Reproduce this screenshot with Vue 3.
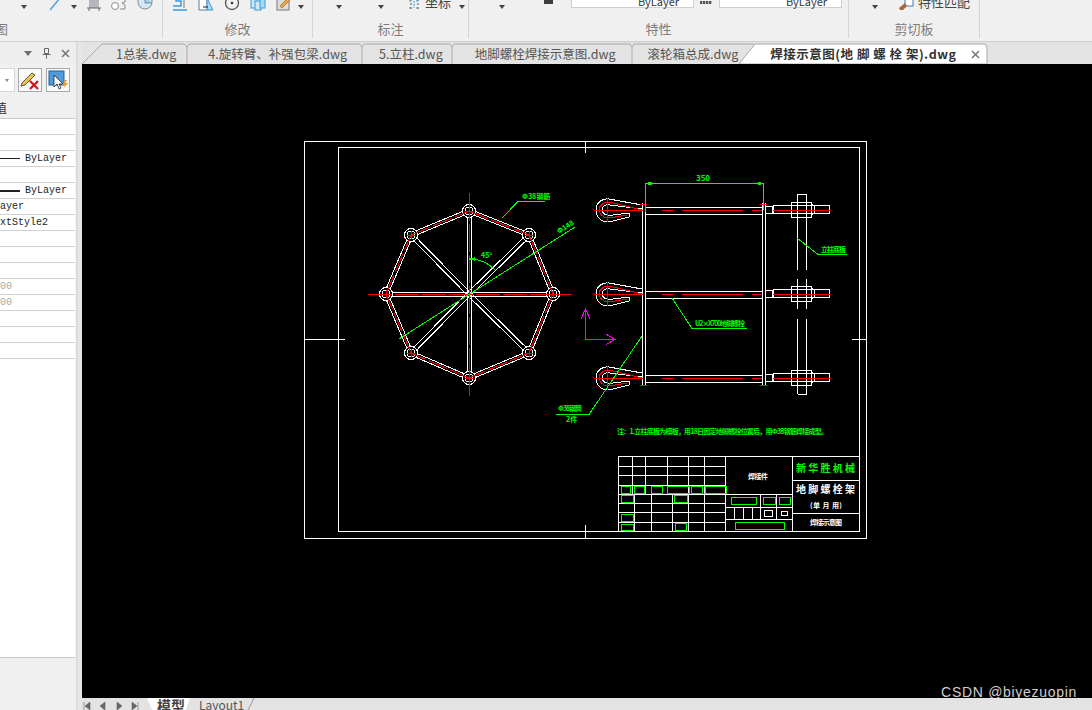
<template>
  <div class="app">
    <header class="ribbon">
      <section class="group g1">
        <div class="tools">
          <span class="caret"></span>
          <svg class="ic wide" width="12" height="16" viewBox="0 0 12 16"><path d="M1 15 11 3" stroke="#4aa3df" stroke-width="1.5" fill="none" /><path d="M9 2l2 1" stroke="#2c6fa8" stroke-width="2" /></svg>
          <span class="caret"></span>
          <svg class="ic" width="14" height="16" viewBox="0 0 14 16"><rect x="2" y="1" width="10" height="12" fill="#b4b8bc" /><path d="M0 13h14M2 13v3M12 13v3" stroke="#666" fill="none" /></svg>
          <svg class="ic" width="16" height="16" viewBox="0 0 16 16"><circle cx="4" cy="11" r="3.5" fill="#fff" stroke="#8a8a8a" /><path d="M9 4h5v3l-3 1 3 2v4H9" fill="none" stroke="#8a8a8a" /></svg>
          <svg class="ic" width="16" height="16" viewBox="0 0 16 16"><path d="M1 1h14v6a7 7 0 0 1-14 0z" fill="#d5e8f5" stroke="#7a8a96" /><path d="M8 1v7h7" fill="#9fd0ee" stroke="#7a8a96" /></svg>
        </div>
        <div class="label start">图</div>
      </section>

      <section class="group g2">
        <div class="tools">
          <svg class="ic" width="16" height="16" viewBox="0 0 16 16"><path d="M1 15h14M1 11h8V6H4V2" fill="none" stroke="#3b9ad6" stroke-width="1.5" /><path d="M12 2v11" stroke="#6a7a86" /></svg>
          <svg class="ic" width="16" height="16" viewBox="0 0 16 16"><path d="M1 1h8v14H1z" fill="#fff" stroke="#6a7a86" /><path d="M9 3l6 12H9z" fill="#a9d8f3" stroke="#3b9ad6" /><path d="M5 12h5" stroke="#222" /></svg>
          <svg class="ic" width="16" height="16" viewBox="0 0 16 16"><circle cx="8" cy="8" r="6.5" fill="none" stroke="#555" stroke-width="1.3" /><circle cx="8" cy="8" r="1.3" fill="#333" /></svg>
          <svg class="ic" width="16" height="16" viewBox="0 0 16 16"><rect x="1" y="4" width="6" height="9" fill="#cfe7f6" stroke="#3b9ad6" /><rect x="5" y="6" width="6" height="9" fill="#cfe7f6" stroke="#3b9ad6" /><rect x="10" y="4" width="5" height="9" fill="#a9d8f3" stroke="#3b9ad6" /></svg>
          <svg class="ic" width="16" height="16" viewBox="0 0 16 16"><rect x="1" y="1" width="12" height="14" fill="#dcdcdc" stroke="#777" /><path d="M4 11l8-8 2 2-8 8z" fill="#e9a93c" stroke="#8c5a14" stroke-width=".6" /></svg>
          <span class="caret near"></span>
        </div>
        <div class="label">修改</div>
      </section>

      <section class="group g3">
        <div class="tools">
          <span class="caret"></span>
          <span class="caret apart"></span>
          <svg class="ic coord" width="12" height="16" viewBox="0 0 12 16"><path d="M1 6h3M8 6h3M1 13h3M8 13h3M6 6v7" stroke="#3b9ad6" stroke-dasharray="2 1" fill="none" /><path d="M3 4v11M10 4v11" stroke="#555" stroke-dasharray="2 2" /></svg>
          <span class="toolText">坐标</span>
          <span class="caret near"></span>
        </div>
        <div class="label">标注</div>
      </section>

      <section class="group g4">
        <div class="tools">
          <span class="caret"></span>
          <span class="blackChip"></span>
          <span class="combo">ByLayer</span>
          <span class="dots"></span>
          <span class="combo">ByLayer</span>
        </div>
        <div class="label">特性</div>
      </section>

      <section class="group g5">
        <div class="tools">
          <span class="caret"></span>
          <svg class="ic brush" width="15" height="16" viewBox="0 0 15 16"><rect x="6" y="1" width="8" height="10" fill="#fff" stroke="#3b7db5" /><rect x="8" y="2" width="5" height="3" fill="#3b9ad6" /><path d="M0 13l6-5 2 3-4 4H1z" fill="#a9653a" /></svg>
          <span class="toolText match">特性匹配</span>
        </div>
        <div class="label">剪切板</div>
      </section>
      <div class="ribbonRest"></div>
    </header>

    <main class="body">
      <aside class="props">
        <div class="propsHead">
          <span class="headArrow"></span>
          <svg width="9" height="11" viewBox="0 0 9 11"><path d="M2.5.5h4v5h-4zM.5 6.5h8M4.5 6.5v4" fill="none" stroke="#666" /></svg>
          <svg width="9" height="9" viewBox="0 0 9 9"><path d="M1 1l7 7M8 1 1 8" stroke="#777" stroke-width="1.6" /></svg>
        </div>
        <div class="propsTools">
          <div class="select"><span class="selectArrow"></span></div>
          <button type="button" class="toolBtn" aria-label="清除">
            <svg width="20" height="20" viewBox="0 0 20 20"><path d="M2 13 12 3l3 2L5 15l-4 1z" fill="#f0c14b" stroke="#333" stroke-width=".8" /><path d="M10 11l8 8M18 11l-8 8" stroke="#d3121a" stroke-width="2.2" /></svg>
          </button>
          <button type="button" class="toolBtn" aria-label="选择">
            <svg width="20" height="20" viewBox="0 0 20 20"><rect x="1" y="1" width="15" height="14" fill="#4f9bdc" stroke="#1f5f9c" /><path d="M6 5v12l3-3 2 5 2-1-2-4h4z" fill="#fff" stroke="#222" stroke-width=".8" /><path d="M17 10l-3 5h3l-2 4 5-6h-3l2-3z" fill="#f0961e" /></svg>
          </button>
        </div>
        <div class="table">
          <div class="tableHead">值</div>
          <div v-for="(row, i) in propRows" :key="i" class="row" :class="{ muted: row.muted }">
            <span v-if="row.line" class="rowLine" :class="{ thick: row.line === 2 }"></span>
            <span class="rowText">{{ row.text }}</span>
          </div>
        </div>
        <div class="propsFoot"></div>
      </aside>
      <div class="splitter"></div>

      <div class="work">
        <nav class="tabs">
          <svg class="tabShapes" width="1010" height="22" viewBox="82 42 1010 22">
            <path
              d="M82 64 102 44H184l3 3V64M187 47l2-3H360l2 3V64M362 47l2-3H450l2 3V64M452 47l2-3H630l2 3V64M632 47l2-3H754"
              fill="none"
              stroke="#a9a9a9"
            />
            <path d="M739 64 755 44H985l2 3V64z" fill="#fff" stroke="#a9a9a9" />
          </svg>
          <span v-for="tab in tabs" :key="tab" class="tab">{{ tab }}</span>
          <span class="tab active">焊接示意图(地 脚 螺 栓 架).dwg</span>
          <svg class="tabClose" width="9" height="9" viewBox="0 0 9 9"><path d="M1 1l7 7M8 1 1 8" stroke="#777" stroke-width="1.5" /></svg>
        </nav>

        <div class="canvas">
          <svg class="drawing" width="1010" height="634" viewBox="82 64 1010 634">
            <g fill="none" stroke="#fff">
              <rect x="304.5" y="141.5" width="562" height="397" />
              <rect x="338.5" y="147.5" width="521" height="384" />
              <path d="M585.5 141v12M585.5 525v14M304 339.5h41M852 339.5h15" />

              <!-- top view -->
              <path v-for="(l, i) in octagonWhite" :key="'w' + i" :d="l" />
              <circle v-for="(p, i) in octagon" :key="'c' + i" :cx="p[0]" :cy="p[1]" r="6.5" fill="#000" />
              <circle v-for="(p, i) in octagon" :key="'d' + i" :cx="p[0]" :cy="p[1]" r="4" />

              <!-- side view -->
              <path d="M642.5 203v182M645.5 203v182M762.5 203v182M765.5 203v182" />
              <g v-for="y in boltRows" :key="y">
                <path :d="`M645 ${y - 3}.5H762M645 ${y + 4}.5H762`" />
                <path :d="hookWhite(y)" />
                <rect x="765.5" :y="y - 3.5" width="7" height="7" />
                <rect x="773.5" :y="y - 4.5" width="56" height="8" />
                <rect x="791.5" :y="y - 7.5" width="20" height="15" />
                <path :d="`M811 ${y - 6}l3 2v7l-3 2`" />
              </g>
              <path d="M797.5 194v76M806.5 194v76M797.5 194.5h9M797.5 279v30M806.5 279v30M797.5 319v75M806.5 319v75M797.5 394.5h9" />
            </g>

            <g fill="none" stroke="#f00">
              <path v-for="(l, i) in octagonRed" :key="'r' + i" :d="l" stroke-dasharray="20 4" />
              <path d="M368 294.5H572" stroke-dasharray="24 3" />
              <path d="M469.5 193V396" stroke-dasharray="28 3" />
              <path
                v-for="(p, i) in octagon"
                :key="'x' + i"
                :d="`M${p[0] - 4} ${p[1]}.5h8M${p[0]}.5 ${p[1] - 4}v8`"
              />
              <g v-for="y in boltRows" :key="'b' + y">
                <path :d="hookRed(y)" />
                <path
                  v-for="s in boltSegments"
                  :key="s[0]"
                  :d="`M${s[0]} ${y}.5H${s[1]}`"
                />
              </g>
              <path d="M640 204.5h7M760 204.5h7M640 385.5h7M760 385.5h7" />
            </g>

            <g fill="none" stroke="#0f0">
              <path d="M399 339 575 227" />
              <path d="M502 218 518 201.5H545" />
              <path d="M469 259A35 35 0 0 1 495 270" />
              <path d="M469 259l5-1v2z" fill="#0f0" />
              <path d="M645 183.5H764" />
              <path d="M645.5 183V212" />
              <path d="M763.5 183V210" />
              <path d="M646 183.5l5-1v2zM763 183.5l-5-1v2z" fill="#0f0" />
              <path d="M797 238 818 254.5H847" />
              <path d="M672 298 692 328.5H747" />
              <path d="M642 336 589 414.5H556" />
            </g>

            <g class="cad green">
              <text x="522" y="199" font-size="7">Φ38钢筋</text>
              <text x="481" y="258" font-size="7">45°</text>
              <text x="0" y="0" font-size="7" transform="translate(559 234) rotate(-33)">Φ148</text>
              <text x="703" y="181" font-size="8" text-anchor="middle">350</text>
              <text x="821" y="252" font-size="7" textLength="25">立柱底板</text>
              <text x="695" y="326" font-size="7" textLength="50">U2×X700地脚螺栓</text>
              <text x="558" y="411" font-size="7" textLength="24">Φ38钢筒</text>
              <text x="566" y="422" font-size="7">2件</text>
              <text x="617" y="434" font-size="7" textLength="211">注：1.立柱底板为模板，用18日固定地脚螺栓位置后，用Φ38钢筋焊接成型。</text>
            </g>

            <g fill="none" stroke="#fff">
              <path v-for="(l, i) in titleLines" :key="'t' + i" :d="l" />
              <rect x="764.5" y="510.5" width="8" height="6" />
              <rect x="781.5" y="511.5" width="6" height="4" />
            </g>
            <g fill="none" stroke="#0f0">
              <rect
                v-for="(r, i) in titleBoxes"
                :key="'g' + i"
                :x="r[0] + 0.5"
                :y="r[1] + 0.5"
                :width="r[2] - r[0]"
                :height="r[3] - r[1]"
              />
            </g>
            <g class="cad white">
              <text x="748" y="479" font-size="7" textLength="20">焊接件</text>
              <text x="796" y="493" font-size="10" textLength="59">地脚螺栓架</text>
              <text x="810" y="508" font-size="7" textLength="32">(单 月 用)</text>
              <text x="810" y="525" font-size="7" textLength="32">焊接示意图</text>
            </g>
            <text class="cad green" x="796" y="472" font-size="10" textLength="59">新华胜机械</text>

            <g fill="none" stroke="#f0f">
              <path d="M585.5 339.5V309M581 319l4.5-10 4.5 10M585 339.5H615M606 334l9 5.5-9 5" />
            </g>
          </svg>
          <span class="watermark">CSDN @biyezuopin</span>
        </div>

        <footer class="sheets">
          <div class="navs">
            <svg v-for="n in navIcons" :key="n" width="8" height="8" viewBox="0 0 8 8"><path :d="n" fill="#666" stroke="#666" stroke-width=".6" /></svg>
          </div>
          <span class="sheet current">模型</span>
          <span class="sheet">Layout1</span>
          <svg class="slash" width="8" height="12" viewBox="0 0 8 12"><path d="M7 0 1 12" stroke="#999" fill="none" /></svg>
        </footer>
      </div>
    </main>
  </div>
</template>

<script setup>
const tabs = ['1总装.dwg', '4.旋转臂、补强包梁.dwg', '5.立柱.dwg', '地脚螺栓焊接示意图.dwg', '滚轮箱总成.dwg']

const propRows = [
  { text: '' },
  { text: '' },
  { text: 'ByLayer', line: 1 },
  { text: '' },
  { text: 'ByLayer', line: 2 },
  { text: 'ayer' },
  { text: 'xtStyle2' },
  { text: '' },
  { text: '' },
  { text: '' },
  { text: '00', muted: true },
  { text: '00', muted: true },
  { text: '' },
  { text: '' },
  { text: '' },
]

const navIcons = ['M1 0v8M7 0 2 4l5 4z', 'M6 0 1 4l5 4z', 'M2 0l5 4-5 4z', 'M7 0v8M1 0l5 4-5 4z']

const octagon = [
  [469, 211], [529, 235], [553, 294], [529, 353],
  [469, 378], [411, 353], [386, 294], [411, 235],
]
const center = [469, 294]

// two parallel lines either side of a centre line
const doubled = (a, b, off) => {
  const dx = b[0] - a[0]
  const dy = b[1] - a[1]
  const len = Math.hypot(dx, dy)
  const nx = (-dy / len) * off
  const ny = (dx / len) * off
  return [
    `M${a[0] + nx} ${a[1] + ny}L${b[0] + nx} ${b[1] + ny}`,
    `M${a[0] - nx} ${a[1] - ny}L${b[0] - nx} ${b[1] - ny}`,
  ]
}

const octagonWhite = octagon.flatMap((p, i) => [
  ...doubled(p, octagon[(i + 1) % 8], 2),
  ...doubled(center, p, 2),
])
const octagonRed = octagon.map((p, i) => {
  const q = octagon[(i + 1) % 8]
  return `M${p[0]} ${p[1]}L${q[0]} ${q[1]}`
})

const boltRows = [210, 294, 378]
const boltSegments = [[634, 643], [662, 673], [682, 743], [752, 762], [773, 830]]

const hookWhite = (y) => {
  const at = (x, dy) => `${607 + x} ${y + dy}`
  return `M${at(35, -5)}L${at(2, -11)}C${at(-6, -12)} ${at(-11, -6)} ${at(-11, 0)}C${at(-11, 7)} ${at(-6, 12)} ${at(2, 12)}L${at(22, 7)}Q${at(24, 4)} ${at(22, 3)}L${at(6, 5)}C${at(0, 6)} ${at(-5, 4)} ${at(-5, 0)}C${at(-5, -4)} ${at(-1, -6)} ${at(3, -5)}L${at(35, -1)}`
}

const hookRed = (y) => {
  const at = (x, dy) => `${607 + x} ${y + dy}`
  return `M${at(-13, 0)}H635M607 ${y - 12}V${y + 12}M${at(35, 0)}L${at(2, -8)}C${at(-4, -8)} ${at(-8, -4)} ${at(-8, 0)}C${at(-8, 4)} ${at(-4, 8)} ${at(2, 8)}L${at(20, 5)}`
}

const h = (y, x1, x2) => `M${x1} ${y}.5H${x2}`
const v = (x, y1, y2) => `M${x}.5 ${y1}V${y2}`

const titleLines = [
  'M618.5 456.5H859.5M618.5 456V531M792.5 456V531M725.5 456V531M618 531.5H859',
  ...[466, 475, 485, 494].map((y) => h(y, 618, 725)),
  ...[632, 645, 667, 688, 704].map((x) => v(x, 456, 494)),
  ...[503, 512, 522].map((y) => h(y, 618, 725)),
  ...[634, 651, 672, 688, 704].map((x) => v(x, 494, 531)),
  ...[494, 507, 519].map((y) => h(y, 725, 792)),
  v(760, 494, 519),
  v(776, 494, 519),
  ...[734, 743, 752].map((x) => v(x, 507, 519)),
  h(480, 792, 859),
  h(513, 792, 859),
]

const titleBoxes = [
  [621, 486, 630, 493], [634, 486, 644, 493], [651, 486, 662, 493],
  [667, 486, 689, 493], [691, 486, 702, 493], [705, 486, 726, 493],
  [621, 495, 633, 502], [674, 495, 687, 502], [621, 514, 633, 521],
  [621, 524, 633, 530], [675, 523, 686, 530], [731, 497, 756, 504],
  [763, 497, 775, 504], [779, 497, 790, 504], [735, 522, 784, 529],
]
</script>

<style>
html,
body {
  margin: 0;
  background: #f0f0f0;
  overflow: hidden;
}
</style>

<style scoped>
.app {
  width: 1092px;
  height: 710px;
  display: flex;
  flex-direction: column;
  overflow: hidden;
  font-family: "Noto Sans CJK SC", "Liberation Sans", sans-serif;
  color: #555;
}

.ribbon {
  height: 41px;
  flex: none;
  display: flex;
  background: #f0f0f0;
  border-bottom: 1px solid #cfcfcf;
}

.group {
  flex: none;
  height: 38px;
  box-sizing: border-box;
  border-right: 1px solid #d4d4d4;
  display: flex;
  flex-direction: column;
}

.g1 { width: 163px; }
.g2 { width: 150px; }
.g3 { width: 156px; }
.g4 { width: 380px; }
.g5 { width: 131px; }
.ribbonRest { flex: 1; }

.tools {
  height: 11px;
  flex: none;
  display: flex;
  align-items: flex-end;
  gap: 10px;
  overflow: hidden;
}

.g1 .tools { padding-left: 21px; }
.g2 .tools { padding-left: 9px; }
.g3 .tools { padding-left: 23px; }
.g4 .tools { padding-left: 30px; }
.g5 .tools { padding-left: 23px; }

.ic {
  flex: none;
  display: block;
}

.wide { margin-left: 12px; }

.caret {
  flex: none;
  width: 0;
  height: 0;
  border: 3px solid transparent;
  border-top: 4px solid #444;
  border-bottom: 0;
  margin-bottom: 2px;
}

.near { margin-left: -4px; }
.apart { margin-left: 26px; }
.coord { margin-left: 14px; }

.toolText {
  flex: none;
  font-size: 13px;
  line-height: 18px;
  color: #444;
  margin-left: -5px;
}

.g3 .near { margin-left: -2px; }
.match { margin-left: -6px; }
.brush { margin-left: 11px; }

.blackChip {
  flex: none;
  width: 9px;
  height: 4px;
  margin: 0 8px 7px 29px;
  background: #3c3c3c;
}

.combo {
  flex: none;
  width: 123px;
  height: 8px;
  box-sizing: border-box;
  background: #fff;
  border: 1px solid #d0d0d0;
  border-top: 0;
  font-size: 11px;
  line-height: 1;
  color: #333;
  padding-right: 14px;
  display: flex;
  align-items: flex-end;
  justify-content: flex-end;
  margin-bottom: 3px;
}

.dots {
  flex: none;
  width: 12px;
  height: 3px;
  margin: 0 -3px 7px -4px;
  background: repeating-linear-gradient(90deg, #555 0 2px, #bbb 2px 3px);
}

.label {
  margin-top: 9px;
  text-align: center;
  font-size: 13px;
  line-height: 17px;
  color: #7d7d7d;
}

.label.start {
  text-align: left;
  margin-left: -5px;
}

.body {
  flex: 1;
  min-height: 0;
  display: flex;
}

.props {
  width: 76px;
  flex: none;
  display: flex;
  flex-direction: column;
  background: #f0f0f0;
  overflow: hidden;
}

.propsHead {
  height: 22px;
  flex: none;
  display: flex;
  align-items: center;
  padding-left: 24px;
  gap: 10px;
  background: #eeeeee;
}

.headArrow {
  width: 0;
  height: 0;
  border: 4px solid transparent;
  border-top: 5px solid #707070;
  border-bottom: 0;
}

.propsTools {
  height: 35px;
  flex: none;
  display: flex;
  align-items: flex-start;
  gap: 4px;
  padding-top: 4px;
  box-sizing: border-box;
}

.select {
  width: 15px;
  height: 24px;
  flex: none;
  margin-right: -1px;
  box-sizing: border-box;
  background: #fff;
  border: 1px solid #d8d8d8;
  border-left: 0;
  display: flex;
  align-items: center;
  justify-content: flex-end;
  padding-right: 5px;
}

.selectArrow {
  width: 0;
  height: 0;
  border: 2.5px solid transparent;
  border-top: 3px solid #888;
  border-bottom: 0;
}

.toolBtn {
  width: 24px;
  height: 24px;
  flex: none;
  padding: 0;
  box-sizing: border-box;
  border: 1px solid #a9a9a9;
  background: #fafafa;
  display: flex;
  align-items: center;
  justify-content: center;
}

.table {
  width: 75px;
  flex: none;
  background: #fff;
  height: 559px;
  box-sizing: border-box;
  border-bottom: 1px solid #c8c8c8;
}

.tableHead {
  height: 20px;
  box-sizing: border-box;
  background: #f0f0f0;
  border-bottom: 1px solid #c8c8c8;
  font-size: 12px;
  line-height: 18px;
  color: #333;
  margin-left: -5px;
}

.row {
  height: 16px;
  box-sizing: border-box;
  border-bottom: 1px solid #d0d0d0;
  display: flex;
  align-items: center;
  font-family: "Liberation Mono", monospace;
  font-size: 10px;
  line-height: 15px;
  color: #222;
}

.row.muted { color: #a8a8a8; }

.rowLine {
  width: 20px;
  height: 1px;
  margin-right: 5px;
  background: #222;
}

.rowLine.thick { height: 2px; }

.propsFoot { flex: 1; }

.splitter {
  width: 6px;
  flex: none;
  background: linear-gradient(90deg, #dcdcdc 0 2px, #e6e6e6 2px);
}

.work {
  flex: 1;
  min-width: 0;
  display: flex;
  flex-direction: column;
}

.tabs {
  position: relative;
  height: 22px;
  flex: none;
  display: flex;
  align-items: center;
  gap: 32px;
  padding-left: 34px;
  background: #e3e3e3;
  overflow: hidden;
}

.tabShapes {
  position: absolute;
  left: 0;
  top: 0;
}

.tab {
  position: relative;
  flex: none;
  font-size: 12.5px;
  line-height: 20px;
  padding-top: 1px;
  color: #555;
  white-space: pre;
}

.tab.active {
  font-weight: 700;
  color: #333;
  letter-spacing: .5px;
}

.tabClose {
  position: relative;
  margin-left: -17px;
  margin-top: 2px;
}

.canvas {
  position: relative;
  flex: 1;
  min-height: 0;
  background: #000;
  overflow: hidden;
}

.drawing {
  display: block;
  shape-rendering: crispEdges;
}

.cad {
  font-family: "Noto Sans CJK SC", "Liberation Sans", sans-serif;
  font-weight: 700;
}

.green { fill: #0f0; }
.white { fill: #fff; }

.watermark {
  position: absolute;
  right: 15px;
  bottom: -2px;
  font-family: "Liberation Sans", sans-serif;
  font-size: 14px;
  line-height: 16px;
  color: #cfcfcf;
  letter-spacing: .7px;
}

.sheets {
  height: 12px;
  flex: none;
  display: flex;
  align-items: flex-start;
  background: #e3e3e3;
  overflow: hidden;
}

.navs {
  width: 65px;
  flex: none;
  display: flex;
  gap: 8px;
  padding: 4px 0 0 1px;
  box-sizing: border-box;
}

.sheet {
  flex: none;
  font-size: 12px;
  line-height: 14px;
  color: #555;
  padding-left: 9px;
}

.sheet.current {
  width: 43px;
  box-sizing: border-box;
  padding-left: 10px;
  font-weight: 700;
  font-size: 14px;
  background: #fff;
  color: #444;
  clip-path: polygon(0 0, 100% 0, calc(100% - 5px) 100%, 6px 100%);
}

.slash {
  flex: none;
  margin-left: 3px;
}
</style>
